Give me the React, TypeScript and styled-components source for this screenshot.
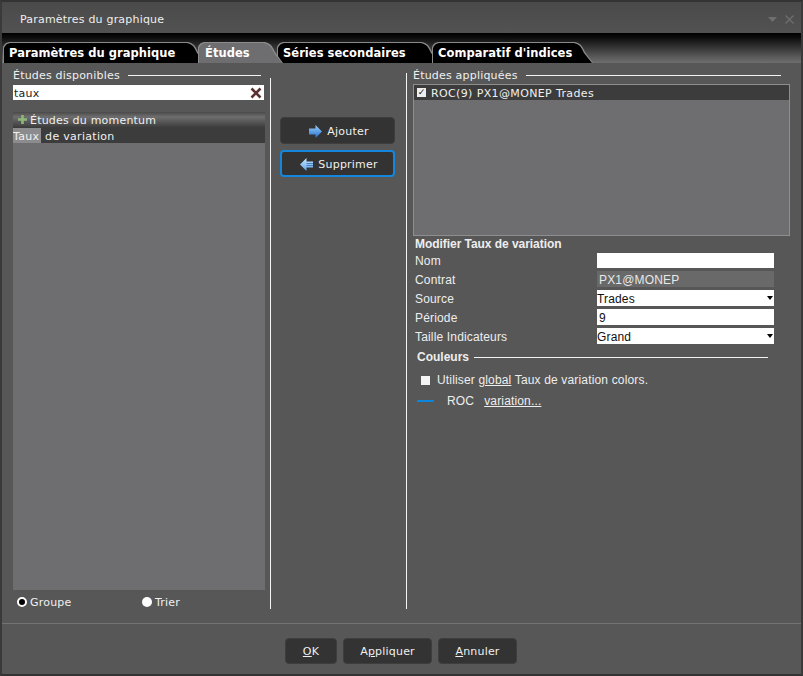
import React from 'react';
import styled, { createGlobalStyle } from 'styled-components';

const GlobalStyle = createGlobalStyle`
  html, body {
    margin: 0;
    padding: 0;
    background: #3c3c3c;
  }
`;

const tabShape =
  'polygon(0 5px, 1px 3px, 3px 1px, 6px 0, calc(100% - 18px) 0, calc(100% - 15px) 1px, calc(100% - 12px) 3px, calc(100% - 10px) 6px, calc(100% - 8px) 10px, 100% 100%, 0 100%)';

const Dialog = styled.div`
  width: 803px;
  height: 676px;
  box-sizing: border-box;
  border: 2px solid #3a3a3a;
  border-top-color: #333;
  border-bottom: 2px solid #333;
  background: #575757;
  display: flex;
  flex-direction: column;
  font-family: 'DejaVu Sans', Verdana, sans-serif;
  font-size: 11px;
  letter-spacing: 0.2px;
  color: #f0f0f0;
  overflow: hidden;
`;

const TitleBar = styled.div`
  height: 31px;
  flex: none;
  box-sizing: border-box;
  background: linear-gradient(#4a4a4a, #525252);
  display: flex;
  align-items: center;
  justify-content: space-between;
  padding: 3px 7px 0 18px;
  color: #eee;
`;

const TitleIcons = styled.div`
  display: flex;
  align-items: center;
  gap: 8px;
`;

const TabBand = styled.div`
  height: 30px;
  flex: none;
  box-sizing: border-box;
  padding: 9px 0 0 1px;
  background: linear-gradient(#000 0%, #0c0c0c 15%, #5a5a5a 80%, #6e6e6e 100%);
  display: flex;
  align-items: flex-end;
`;

const Tab = styled.div<{ $w: number; $overlap?: number; $z: number; $active?: boolean }>`
  width: ${(p) => p.$w}px;
  height: 21px;
  box-sizing: border-box;
  position: relative;
  z-index: ${(p) => p.$z};
  margin-left: ${(p) => -(p.$overlap ?? 0)}px;
  padding: 3px 0 0 ${(p) => (p.$active ? 7 : 6)}px;
  font-weight: 700;
  font-size: 11.5px;
  letter-spacing: 0.03px;
  line-height: 16px;
  white-space: nowrap;
  background: ${(p) => (p.$active ? '#8c8c8c' : '#8a8a8a')};
  color: #fff;
  clip-path: ${tabShape};

  &::before {
    content: '';
    position: absolute;
    inset: 1px 1px 0 1px;
    background: ${(p) => (p.$active ? '#6e6e70' : '#000')};
    clip-path: ${tabShape};
  }
`;

const TabLabel = styled.span`
  position: relative;
`;

const Body = styled.div`
  flex: 1;
  display: flex;
  padding: 3px 11px 0 11px;
  min-height: 0;
`;

const LeftColumn = styled.div`
  width: 253px;
  flex: none;
  display: flex;
  flex-direction: column;
`;

const Heading = styled.div`
  display: flex;
  align-items: center;
  gap: 8px;
  height: 19px;
  line-height: 19px;
  padding-right: 5px;
  white-space: nowrap;

  &::after {
    content: '';
    flex: 1;
    height: 1px;
    background: #f4f4f4;
  }
`;

const SearchBox = styled.div`
  height: 15px;
  width: 251px;
  background: #fff;
  color: #222;
  padding-left: 1px;
  box-sizing: border-box;
  display: flex;
  align-items: center;
  justify-content: space-between;
  padding-right: 2px;
`;

const NudgedText = styled.span`
  margin-top: 2px;
`;

const StudyList = styled.div`
  margin-top: 12px;
  flex: none;
  width: 252px;
  height: 478px;
  background: #6e6e70;
  letter-spacing: 0.3px;
`;

const GroupRow = styled.div`
  height: 16px;
  display: flex;
  align-items: center;
  gap: 3px;
  padding-left: 5px;
  letter-spacing: 0.2px;
  background: linear-gradient(#4a4a4a, #6e6e6e 30%, #3a3a3a);
`;

const ItemRow = styled.div`
  height: 15px;
  line-height: 17px;
  background: #3c3c3c;
  display: flex;
  overflow: hidden;
  white-space: pre;
`;

const Match = styled.span`
  background: #8c8c8e;
  padding-right: 2px;
`;

const RadioRow = styled.div`
  margin-top: 4px;
  padding-left: 4px;
  display: flex;
  height: 16px;
  align-items: center;
`;

const RadioItem = styled.label`
  width: 126px;
  display: flex;
  align-items: center;
  gap: 3px;

  & + & {
    margin-left: 1px;
  }
`;

const Radio = styled.span<{ $on?: boolean }>`
  width: 10px;
  height: 10px;
  box-sizing: border-box;
  border-radius: 50%;
  background: ${(p) => (p.$on ? '#000' : '#fff')};
  border: ${(p) => (p.$on ? '2px solid #fff' : 'none')};
`;

const Divider = styled.div<{ $top: number; $left?: number }>`
  width: 1px;
  flex: none;
  background: #f4f4f4;
  margin-top: ${(p) => p.$top}px;
  margin-left: ${(p) => p.$left ?? 0}px;
  height: ${(p) => 543 - p.$top}px;
`;

const MiddleColumn = styled.div`
  width: 135px;
  flex: none;
  box-sizing: border-box;
  padding: 51px 0 0 9px;
  display: flex;
  flex-direction: column;
  gap: 6px;
`;

const ArrowButton = styled.div<{ $focus?: boolean }>`
  width: 115px;
  height: 27px;
  box-sizing: border-box;
  padding: 1px 0 0 2px;
  border-radius: 4px;
  background: #333;
  border: ${(p) => (p.$focus ? '2px solid #1487dc' : '1px solid #3e3e3e')};
  display: flex;
  align-items: center;
  justify-content: center;
  gap: 4px;
`;

const FooterButton = styled.div<{ $w: number }>`
  width: ${(p) => p.$w}px;
  height: 26px;
  box-sizing: border-box;
  border-radius: 4px;
  background: #333;
  border: 1px solid #3e3e3e;
  display: flex;
  align-items: center;
  justify-content: center;
`;

const RightColumn = styled.div`
  flex: 1;
  padding-left: 6px;
  display: flex;
  flex-direction: column;
  min-width: 0;
`;

const AppliedHeading = styled(Heading)`
  padding-right: 9px;
`;

const AppliedList = styled.div`
  width: 377px;
  height: 152px;
  margin-top: -1px;
  box-sizing: border-box;
  background: #6e6e70;
  border: 1px solid #8e8e8e;
`;

const AppliedRow = styled.div`
  height: 15px;
  background: #3c3c3c;
  display: flex;
  align-items: center;
  gap: 5px;
  padding-left: 3px;
  letter-spacing: 0.37px;
`;

const MiniCheck = styled.span`
  width: 9px;
  height: 9px;
  background: #eee;
  color: #111;
  font-size: 9px;
  line-height: 9px;
  font-weight: 700;
  text-align: center;
  letter-spacing: 0;
`;

const EditForm = styled.div`
  font-family: 'Liberation Sans', Arial, sans-serif;
  font-size: 12px;
  letter-spacing: 0.16px;
  color: #eee;
  padding-left: 2px;
`;

const EditTitle = styled.div`
  font-weight: 700;
  letter-spacing: -0.05px;
  height: 16px;
  line-height: 16px;
`;

const FormRow = styled.div`
  display: flex;
  height: 16px;
  line-height: 18px;
  margin-top: 3px;

  ${EditTitle} + & {
    margin-top: 1px;
    height: 15px;
    line-height: 16px;
  }
`;

const FormLabel = styled.div`
  width: 182px;
  flex: none;
`;

const Field = styled.div<{ $disabled?: boolean; $pad?: number }>`
  width: 177px;
  height: 100%;
  box-sizing: border-box;
  overflow: hidden;
  padding-left: ${(p) => p.$pad ?? 0}px;
  background: ${(p) => (p.$disabled ? '#696969' : '#fff')};
  color: ${(p) => (p.$disabled ? '#e8e8e8' : '#111')};
  position: relative;
`;

const Caret = styled.span`
  position: absolute;
  right: 1px;
  top: 6px;
  width: 0;
  height: 0;
  border-left: 3.5px solid transparent;
  border-right: 3.5px solid transparent;
  border-top: 4px solid #000;
`;

const ColorsHeading = styled.div`
  display: flex;
  align-items: center;
  gap: 5px;
  margin: 5px 0 0 2px;
  width: 351px;
  height: 16px;
  font-weight: 700;
  letter-spacing: 0;

  &::after {
    content: '';
    flex: 1;
    height: 1px;
    background: #f4f4f4;
  }
`;

const CheckRow = styled.div`
  display: flex;
  align-items: center;
  gap: 7px;
  margin: 7px 0 0 6px;
  height: 16px;
`;

const CheckBox = styled.span`
  width: 9px;
  height: 9px;
  background: #f4f4f4;
`;

const ColorRow = styled.div`
  display: flex;
  align-items: center;
  margin: 5px 0 0 2px;
  height: 16px;
`;

const Swatch = styled.span`
  width: 17px;
  height: 2px;
  background: #0a86dc;
  margin-right: 13px;
`;

const RocLabel = styled.span`
  margin-right: 10px;
`;

const Link = styled.span`
  text-decoration: underline;
`;

const Footer = styled.div`
  flex: none;
  height: 51px;
  box-sizing: border-box;
  border-top: 1px solid #737373;
  display: flex;
  justify-content: center;
  align-items: flex-start;
  gap: 6px;
  padding: 14px 1px 0 0;
`;

const PlusSvg = styled.svg`
  flex: none;
  margin-top: -2px;
`;

const RightArrow = () => (
  <svg width="15" height="15" viewBox="0 0 15 15">
    <defs>
      <linearGradient id="ra" x1="0" y1="0" x2="0" y2="1">
        <stop offset="0" stopColor="#9fd0fa" />
        <stop offset="1" stopColor="#1f6fd0" />
      </linearGradient>
    </defs>
    <path d="M1 4.5h6.5V1L14 7.5 7.5 14v-3.5H1z" fill="url(#ra)" />
  </svg>
);

const LeftArrow = () => (
  <svg width="15" height="15" viewBox="0 0 15 15">
    <defs>
      <linearGradient id="la" x1="0" y1="0" x2="0" y2="1">
        <stop offset="0" stopColor="#cfe8ff" />
        <stop offset="1" stopColor="#5aa2ea" />
      </linearGradient>
    </defs>
    <path d="M14 4.5H7.5V1L1 7.5 7.5 14v-3.5H14z" fill="url(#la)" />
    <path d="M7.5 6.5H14M7.5 8.5H14" stroke="#2f6fb8" strokeWidth="0.8" />
  </svg>
);

const ClearIcon = () => (
  <svg width="12" height="12" viewBox="0 0 12 12">
    <path d="M1.5 1.5l9 9M10.5 1.5l-9 9" stroke="#5a3030" strokeWidth="2.6" />
  </svg>
);

const PlusIcon = () => (
  <PlusSvg width="9" height="9" viewBox="0 0 9 9">
    <path d="M4.5 0v9M0 4.5h9" stroke="#8fb878" strokeWidth="2.6" />
  </PlusSvg>
);

const App: React.FC = () => (
  <>
    <GlobalStyle />
    <Dialog>
      <TitleBar>
        <span>Paramètres du graphique</span>
        <TitleIcons>
          <svg width="9" height="5" viewBox="0 0 9 5">
            <path d="M0 0h9L4.5 5z" fill="#6f6f6f" />
          </svg>
          <svg width="9" height="9" viewBox="0 0 9 9">
            <path d="M0.5 0.5l8 8M8.5 0.5l-8 8" stroke="#6f6f6f" strokeWidth="1.2" />
          </svg>
        </TitleIcons>
      </TitleBar>
      <TabBand>
        <Tab $w={203} $z={1}>
          <TabLabel>Paramètres du graphique</TabLabel>
        </Tab>
        <Tab $w={85} $z={3} $overlap={8} $active>
          <TabLabel>Études</TabLabel>
        </Tab>
        <Tab $w={163} $z={1} $overlap={6}>
          <TabLabel>Séries secondaires</TabLabel>
        </Tab>
        <Tab $w={161} $z={2} $overlap={8}>
          <TabLabel>Comparatif d'indices</TabLabel>
        </Tab>
      </TabBand>
      <Body>
        <LeftColumn>
          <Heading>Études disponibles</Heading>
          <SearchBox>
            <NudgedText>taux</NudgedText>
            <ClearIcon />
          </SearchBox>
          <StudyList>
            <GroupRow>
              <PlusIcon />
              <span>Études du momentum</span>
            </GroupRow>
            <ItemRow>
              <Match>Taux</Match>
              <span> de variation</span>
            </ItemRow>
          </StudyList>
          <RadioRow>
            <RadioItem>
              <Radio $on />
              Groupe
            </RadioItem>
            <RadioItem>
              <Radio />
              Trier
            </RadioItem>
          </RadioRow>
        </LeftColumn>
        <Divider $top={12} $left={4} />
        <MiddleColumn>
          <ArrowButton>
            <RightArrow />
            Ajouter
          </ArrowButton>
          <ArrowButton $focus>
            <LeftArrow />
            Supprimer
          </ArrowButton>
        </MiddleColumn>
        <Divider $top={7} />
        <RightColumn>
          <AppliedHeading>Études appliquées</AppliedHeading>
          <AppliedList>
            <AppliedRow>
              <MiniCheck>✓</MiniCheck>
              <NudgedText>ROC(9) PX1@MONEP Trades</NudgedText>
            </AppliedRow>
          </AppliedList>
          <EditForm>
            <EditTitle>Modifier Taux de variation</EditTitle>
            <FormRow>
              <FormLabel>Nom</FormLabel>
              <Field />
            </FormRow>
            <FormRow>
              <FormLabel>Contrat</FormLabel>
              <Field $disabled $pad={2}>PX1@MONEP</Field>
            </FormRow>
            <FormRow>
              <FormLabel>Source</FormLabel>
              <Field>
                Trades
                <Caret />
              </Field>
            </FormRow>
            <FormRow>
              <FormLabel>Période</FormLabel>
              <Field $pad={2}>9</Field>
            </FormRow>
            <FormRow>
              <FormLabel>Taille Indicateurs</FormLabel>
              <Field>
                Grand
                <Caret />
              </Field>
            </FormRow>
            <ColorsHeading>Couleurs</ColorsHeading>
            <CheckRow>
              <CheckBox />
              <span>
                Utiliser <Link>global</Link> Taux de variation colors.
              </span>
            </CheckRow>
            <ColorRow>
              <Swatch />
              <RocLabel>ROC</RocLabel>
              <Link>variation...</Link>
            </ColorRow>
          </EditForm>
        </RightColumn>
      </Body>
      <Footer>
        <FooterButton $w={52}>
          <span>
            <Link>O</Link>K
          </span>
        </FooterButton>
        <FooterButton $w={89}>
          <span>
            A<Link>p</Link>pliquer
          </span>
        </FooterButton>
        <FooterButton $w={79}>
          <span>
            <Link>A</Link>nnuler
          </span>
        </FooterButton>
      </Footer>
    </Dialog>
  </>
);

export default App;
